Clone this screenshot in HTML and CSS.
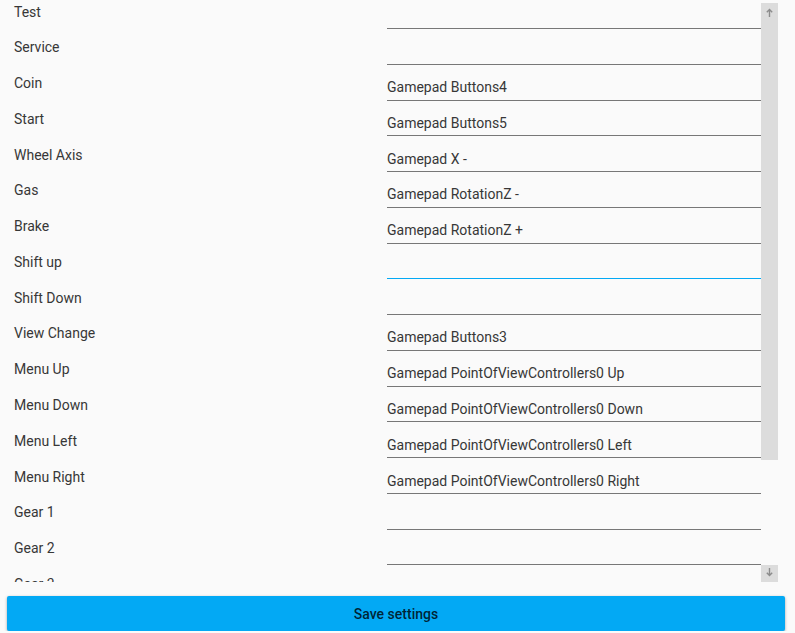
FILE: index.html
```html
<!DOCTYPE html>
<html>
<head>
<meta charset="utf-8">
<link rel="stylesheet" href="styles.css">
</head>
<body>
<div class="page">
  <div class="scroller">
    <div class="viewport">
      <div class="list">
        <div class="row"><div class="label">Test</div><div class="field"></div></div>
        <div class="row"><div class="label">Service</div><div class="field"></div></div>
        <div class="row"><div class="label">Coin</div><div class="field">Gamepad Buttons4</div></div>
        <div class="row"><div class="label">Start</div><div class="field">Gamepad Buttons5</div></div>
        <div class="row"><div class="label">Wheel Axis</div><div class="field">Gamepad X -</div></div>
        <div class="row"><div class="label">Gas</div><div class="field">Gamepad RotationZ -</div></div>
        <div class="row"><div class="label">Brake</div><div class="field">Gamepad RotationZ +</div></div>
        <div class="row"><div class="label">Shift up</div><div class="field focused"></div></div>
        <div class="row"><div class="label">Shift Down</div><div class="field"></div></div>
        <div class="row"><div class="label">View Change</div><div class="field">Gamepad Buttons3</div></div>
        <div class="row"><div class="label">Menu Up</div><div class="field">Gamepad PointOfViewControllers0 Up</div></div>
        <div class="row"><div class="label">Menu Down</div><div class="field">Gamepad PointOfViewControllers0 Down</div></div>
        <div class="row"><div class="label">Menu Left</div><div class="field">Gamepad PointOfViewControllers0 Left</div></div>
        <div class="row"><div class="label">Menu Right</div><div class="field">Gamepad PointOfViewControllers0 Right</div></div>
        <div class="row"><div class="label">Gear 1</div><div class="field"></div></div>
        <div class="row"><div class="label">Gear 2</div><div class="field"></div></div>
        <div class="row"><div class="label">Gear 3</div><div class="field"></div></div>
      </div>
    </div>
    <div class="scrollbar">
      <div class="sb-btn">
        <svg width="17" height="17" viewBox="0 0 17 17"><path d="M8.5 6.5V14M5.8 9.2L8.5 6.5L11.2 9.2" fill="none" stroke="#8c8c8c" stroke-width="1.4"/></svg>
      </div>
      <div class="sb-thumb"></div>
      <div class="sb-track"></div>
      <div class="sb-btn">
        <svg width="17" height="17" viewBox="0 0 17 17"><path d="M8.5 3V10.5M5.8 7.8L8.5 10.5L11.2 7.8" fill="none" stroke="#8c8c8c" stroke-width="1.4"/></svg>
      </div>
    </div>
  </div>
  <button class="save">Save settings</button>
</div>
</body>
</html>
```
FILE: styles.css
```css
html, body {
  margin: 0;
  padding: 0;
  background: #fafafa;
}
body {
  font-family: Roboto, "Liberation Sans", sans-serif;
  font-size: 14px;
  color: #373737;
}
.page {
  display: flex;
  flex-direction: column;
  width: 795px;
}
.scroller {
  display: flex;
  width: 778px;
  height: 579px;
  margin-top: 3px;
}
.viewport {
  flex: 1;
  overflow: hidden;
}
.list {
  margin-top: -9.8px;
}
.row {
  display: grid;
  grid-template-columns: 373px 1fr;
  padding-left: 14px;
  height: 35.78px;
}
.label {
  line-height: 20px;
  padding-top: 8.4px;
}
.field {
  box-sizing: border-box;
  height: 35.78px;
  line-height: 20px;
  padding-top: 12.4px;
  border-bottom: 1px solid #777777;
  white-space: nowrap;
}
.field.focused {
  border-bottom-color: #03a9f4;
}
.scrollbar {
  width: 17px;
  display: flex;
  flex-direction: column;
}
.sb-btn {
  height: 17px;
  background: #dcdcdc;
  display: flex;
}
.sb-thumb {
  height: 440px;
  background: #dcdcdc;
}
.sb-track {
  flex: 1;
}
.save {
  margin: 14px 0 0 7px;
  width: 778px;
  height: 35px;
  background: #03a9f4;
  border: none;
  border-radius: 2px;
  box-shadow: 0 1px 3px rgba(0, 0, 0, 0.35);
  font-family: Roboto, "Liberation Sans", sans-serif;
  font-size: 14px;
  font-weight: 500;
  color: rgba(0, 0, 0, 0.8);
  padding: 0;
}
```
